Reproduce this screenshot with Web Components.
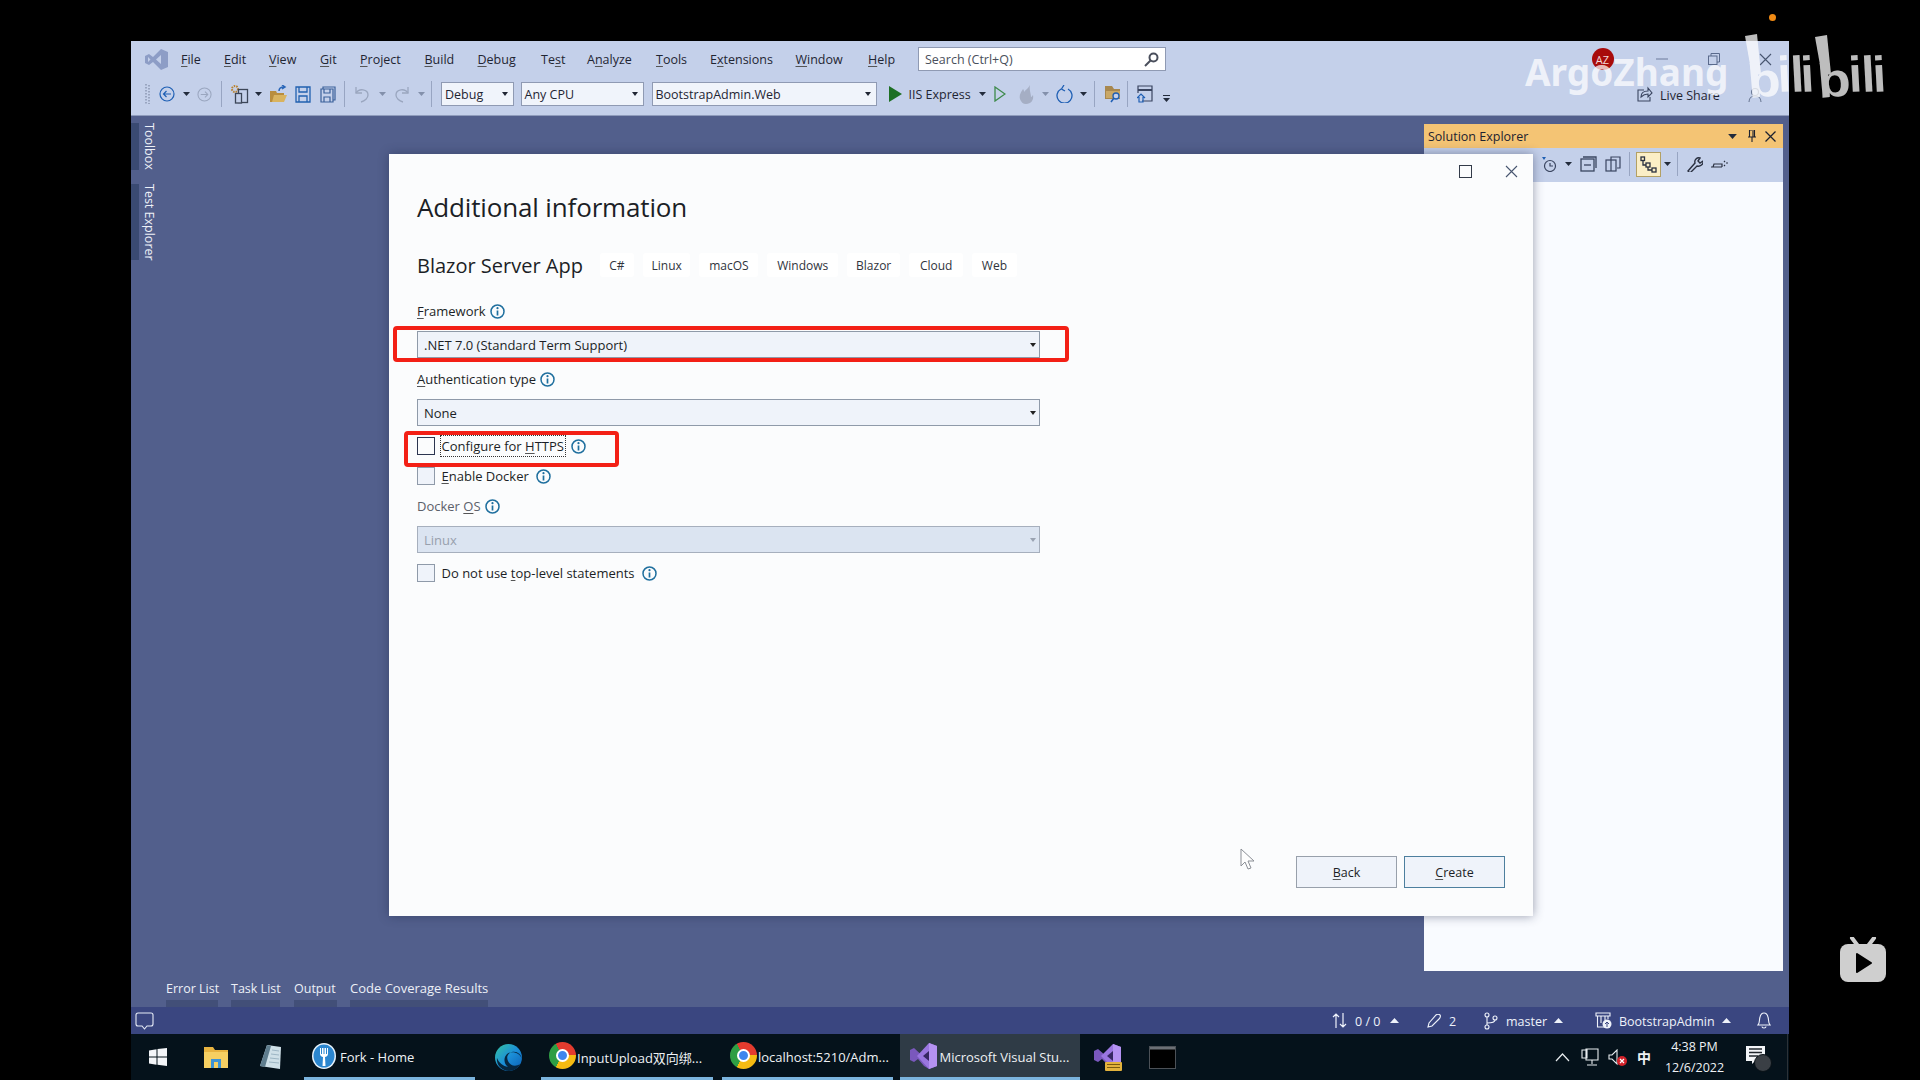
<!DOCTYPE html>
<html>
<head>
<meta charset="utf-8">
<title>Additional information</title>
<style>
  html, body { margin: 0; height: 100%; background: #000; overflow: hidden; }
  body { font-family: "Open Sans", "Noto Sans CJK SC", sans-serif; font-size: 13px; color: #1b1f2a; }
  u { text-decoration-thickness: 1px; text-underline-offset: 2px; text-decoration-color: #555; }
  vs-statusbar span { margin-top: 2px; }
</style>
</head>
<body>

<vs-window>
  <vs-menubar>
    <vs-icon name="vslogo" w="23" h="21" style="margin-left:13.5px;margin-right:13.5px"></vs-icon>
    <vs-menu style="width:43px"><u>F</u>ile</vs-menu>
    <vs-menu style="width:45px"><u>E</u>dit</vs-menu>
    <vs-menu style="width:51px"><u>V</u>iew</vs-menu>
    <vs-menu style="width:40px"><u>G</u>it</vs-menu>
    <vs-menu style="width:64.5px"><u>P</u>roject</vs-menu>
    <vs-menu style="width:53px"><u>B</u>uild</vs-menu>
    <vs-menu style="width:63.5px"><u>D</u>ebug</vs-menu>
    <vs-menu style="width:46px">Te<u>s</u>t</vs-menu>
    <vs-menu style="width:69px">A<u>n</u>alyze</vs-menu>
    <vs-menu style="width:54px"><u>T</u>ools</vs-menu>
    <vs-menu style="width:85.5px">E<u>x</u>tensions</vs-menu>
    <vs-menu style="width:72.5px"><u>W</u>indow</vs-menu>
    <vs-menu style="width:50px"><u>H</u>elp</vs-menu>
    <vs-search>Search (Ctrl+Q)</vs-search>
    <vs-avatar style="margin-left:425.5px">AZ</vs-avatar>
    <vs-icon name="min" w="12" h="12" style="margin-left:42px"></vs-icon>
    <vs-icon name="restore" w="12" h="12" style="margin-left:40px"></vs-icon>
    <vs-icon name="close" w="13" h="13" style="margin-left:39px"></vs-icon>
    <vs-toolrow slot="row2">
      <vs-icon name="grip" w="6" h="20" style="margin-left:13.5px"></vs-icon>
      <vs-icon name="back" w="16" h="16" style="margin-left:8.5px"></vs-icon>
      <vs-icon name="caret" w="7" h="4" style="margin-left:8px"></vs-icon>
      <vs-icon name="forward" w="15" h="15" style="margin-left:7px"></vs-icon>
      <vs-sep style="margin-left:9px"></vs-sep>
      <vs-icon name="newproj" w="19" h="20" style="margin-left:7.5px"></vs-icon>
      <vs-icon name="caret" w="7" h="4" style="margin-left:6px"></vs-icon>
      <vs-icon name="open" w="17" h="18" style="margin-left:8.5px"></vs-icon>
      <vs-icon name="save" w="16" h="17" style="margin-left:7.5px"></vs-icon>
      <vs-icon name="saveall" w="16" h="17" style="margin-left:9px"></vs-icon>
      <vs-sep style="margin-left:8px"></vs-sep>
      <vs-icon name="undo" w="15" h="18" style="margin-left:10px"></vs-icon>
      <vs-icon name="caretgrey" w="7" h="4" style="margin-left:9px"></vs-icon>
      <vs-icon name="redo" w="15" h="18" style="margin-left:8px"></vs-icon>
      <vs-icon name="caretgrey" w="7" h="4" style="margin-left:9px"></vs-icon>
      <vs-sep style="margin-left:6px"></vs-sep>
      <vs-combo style="width:73px;margin-left:9.5px">Debug</vs-combo>
      <vs-combo style="width:123px;margin-left:6.5px">Any CPU</vs-combo>
      <vs-combo style="width:225px;margin-left:8px">BootstrapAdmin.Web</vs-combo>
      <vs-icon name="play" w="13" h="16" style="margin-left:12px"></vs-icon>
      <span style="margin-left:7px;width:65px;white-space:nowrap">IIS Express</span>
      <vs-icon name="caret" w="7" h="4" style="margin-left:5px"></vs-icon>
      <vs-icon name="playo" w="12" h="16" style="margin-left:8px"></vs-icon>
      <vs-icon name="flame" w="15" h="19" style="margin-left:13px"></vs-icon>
      <vs-icon name="caretgrey" w="7" h="4" style="margin-left:8px"></vs-icon>
      <vs-icon name="refresh" w="17" h="18" style="margin-left:7px"></vs-icon>
      <vs-icon name="caret" w="7" h="4" style="margin-left:7px"></vs-icon>
      <vs-sep style="margin-left:7px"></vs-sep>
      <vs-icon name="folderfind" w="16" h="18" style="margin-left:10px"></vs-icon>
      <vs-sep style="margin-left:6px"></vs-sep>
      <vs-icon name="winhome" w="16" h="18" style="margin-left:9px"></vs-icon>
      <vs-icon name="overflow" w="7" h="8" style="margin-left:10px;margin-top:10px"></vs-icon>
      <vs-icon name="share" w="16" h="16" style="margin-left:467.5px"></vs-icon>
      <span style="margin-left:7px;width:62px;white-space:nowrap;margin-top:2px">Live Share</span>
      <vs-icon name="person" w="14" h="15" style="margin-left:26px"></vs-icon>
    </vs-toolrow>
  </vs-menubar>

  <vs-workspace>
    <vs-sidetabs slot="left">
      <vs-sidetab style="height:47px">Toolbox</vs-sidetab>
      <vs-sidetab style="height:76px;margin-top:14px">Test Explorer</vs-sidetab>
    </vs-sidetabs>

    <vs-bottomtabs slot="bottom">
      <vs-bottomtab style="margin-left:166px;width:52px">Error List</vs-bottomtab>
      <vs-bottomtab style="margin-left:13px;width:49px">Task List</vs-bottomtab>
      <vs-bottomtab style="margin-left:14px;width:43px">Output</vs-bottomtab>
      <vs-bottomtab style="margin-left:13px;width:138px;font-size:13px;line-height:17px">Code Coverage Results</vs-bottomtab>
    </vs-bottomtabs>

    <vs-solution slot="right"></vs-solution>

    <vs-dialog slot="dialog">
      <vs-title>Additional information</vs-title>
      <vs-subtitle>
        Blazor Server App
        <vs-chip slot="chips" style="width:34px">C#</vs-chip>
        <vs-chip slot="chips" style="width:47.5px">Linux</vs-chip>
        <vs-chip slot="chips" style="width:59px">macOS</vs-chip>
        <vs-chip slot="chips" style="width:70.5px">Windows</vs-chip>
        <vs-chip slot="chips" style="width:53.5px">Blazor</vs-chip>
        <vs-chip slot="chips" style="width:53.5px">Cloud</vs-chip>
        <vs-chip slot="chips" style="width:45px">Web</vs-chip>
      </vs-subtitle>
      <vs-label style="margin-top:24px"><u>F</u>ramework</vs-label>
      <vs-select style="margin-top:10px">.NET 7.0 (Standard Term Support)</vs-select>
      <vs-label style="margin-top:11px"><u>A</u>uthentication type</vs-label>
      <vs-select style="margin-top:10px">None</vs-select>
      <vs-check focused style="margin-top:10px">Configure for <u>H</u>TTPS</vs-check>
      <vs-check style="margin-top:10px"><u>E</u>nable Docker</vs-check>
      <vs-label muted style="margin-top:10px">Docker <u>O</u>S</vs-label>
      <vs-select disabled style="margin-top:10px">Linux</vs-select>
      <vs-check style="margin-top:10px">Do not use <u>t</u>op-level statements</vs-check>
      <vs-button slot="footer"><u>B</u>ack</vs-button>
      <vs-button slot="footer" primary><u>C</u>reate</vs-button>
    </vs-dialog>
  </vs-workspace>

  <vs-statusbar>
    <vs-icon name="bubble" w="19" h="18" style="margin-left:4px"></vs-icon>
    <vs-icon name="arrows" w="15" h="15" style="margin-left:1178px"></vs-icon>
    <span style="margin-left:8px;width:31px;white-space:nowrap">0 / 0</span>
    <vs-icon name="up" w="9" h="5" style="margin-left:4px"></vs-icon>
    <vs-icon name="pencil" w="14" h="14" style="margin-left:28px"></vs-icon>
    <span style="margin-left:8px;width:10px">2</span>
    <vs-icon name="branch" w="14" h="18" style="margin-left:25px"></vs-icon>
    <span style="margin-left:8px;width:42px">master</span>
    <vs-icon name="up" w="9" h="5" style="margin-left:6px"></vs-icon>
    <vs-icon name="repo" w="17" h="17" style="margin-left:32px"></vs-icon>
    <span style="margin-left:7px;width:98px">BootstrapAdmin</span>
    <vs-icon name="up" w="9" h="5" style="margin-left:5px"></vs-icon>
    <vs-icon name="bell" w="14" h="17" style="margin-left:26px"></vs-icon>
  </vs-statusbar>

  <vs-taskbar>
    <vs-icon name="winlogo" w="18" h="18" style="margin-left:18px"></vs-icon>
    <vs-icon name="explorer" w="24" h="22" style="margin-left:37px"></vs-icon>
    <vs-icon name="notepad" w="24" h="24" style="margin-left:30px"></vs-icon>
    <vs-task style="margin-left:22px;width:171px" open><vs-icon slot="icon" name="fork" w="24" h="26"></vs-icon><span style="margin-left:1px">Fork - Home</span></vs-task>
    <vs-icon name="edge" w="27" h="27" style="margin-left:19.5px"></vs-icon>
    <vs-task style="margin-left:19.5px;width:171.5px" open><vs-chrome slot="icon"></vs-chrome><span style="margin-left:-2px">InputUpload双向绑...</span></vs-task>
    <vs-task style="margin-left:9.5px;width:171px" open><vs-chrome slot="icon"></vs-chrome><span style="margin-left:-2px">localhost:5210/Adm...</span></vs-task>
    <vs-task style="margin-left:6.5px;width:180.5px" open active><vs-icon slot="icon" name="vs" w="27" h="26"></vs-icon>Microsoft Visual Stu...</vs-task>
    <vs-icon name="vspre" w="28" h="27" style="margin-left:14px"></vs-icon>
    <vs-icon name="cmd" w="27" h="23" style="margin-left:27px"></vs-icon>
    <vs-icon name="chevron" w="15" h="9" style="margin-left:379px"></vs-icon>
    <vs-icon name="network" w="18" h="18" style="margin-left:11px"></vs-icon>
    <vs-icon name="speaker" w="19" h="17" style="margin-left:9px"></vs-icon>
    <span style="margin-left:10px;width:14px;font:700 14px 'Noto Sans CJK SC',sans-serif">中</span>
    <vs-clock style="margin-left:13px"></vs-clock>
    <vs-icon name="notify" w="26" h="26" style="margin-left:21px;margin-top:3px"></vs-icon>
    <span style="margin-left:15px;width:1px;height:46px;background:#2c3238"></span>
  </vs-taskbar>
</vs-window>

<video-overlay></video-overlay>

<script>
  const ICONS = {
    vslogo: '<svg viewBox="0 0 23 21"><path fill="#8d9dc6" fill-rule="evenodd" d="M16 0l7 3v15l-7 3-8-8-4 3-4-2V7l4-2 4 3zM16 6l-5 4.500 5 4.500zM3 8v5l2.500-2.500z"/></svg>',
    min: '<svg viewBox="0 0 12 12"><path d="M0 6h12" stroke="#7b89a8" stroke-width="1.200"/></svg>',
    restore: '<svg viewBox="0 0 12 12" fill="none" stroke="#5a6a8c"><rect x=".5" y="3" width="8.500" height="8.500"/><path d="M3 3V.5h8.500V9H9"/></svg>',
    close: '<svg viewBox="0 0 13 13"><path d="M1 1l11 11M12 1L1 12" stroke="#47556f" stroke-width="1.100"/></svg>',
    caret: '<svg viewBox="0 0 7 4"><path d="M0 0h7L3.500 4z" fill="#222b3c"/></svg>',
    caretgrey: '<svg viewBox="0 0 7 4"><path d="M0 0h7L3.500 4z" fill="#8390ab"/></svg>',
    grip: '<svg viewBox="0 0 6 20"><path d="M1 0v20M4 1v19" stroke="#8b96b3" stroke-width="1.500" stroke-dasharray="1.500 1.500"/></svg>',
    back: '<svg viewBox="0 0 16 16" fill="none" stroke="#1e5fb4" stroke-width="1.200"><circle cx="8" cy="8" r="7"/><path d="M12 8H4.500M7.500 5L4.500 8l3 3"/></svg>',
    forward: '<svg viewBox="0 0 16 16" fill="none" stroke="#9aa6bf" stroke-width="1.100"><circle cx="8" cy="8" r="7"/><path d="M4 8h7.500M8.500 5l3 3-3 3"/></svg>',
    newproj: '<svg viewBox="0 0 19 20" fill="none"><circle cx="5" cy="5" r="3" stroke="#b9822f" stroke-width="2" stroke-dasharray="1.500 1"/><rect x="8.500" y="5.500" width="9" height="13" stroke="#3c4658" stroke-width="1.300"/><rect x="5.500" y="9.500" width="6" height="9.500" fill="#c4d0ea" stroke="#3c4658" stroke-width="1.300"/></svg>',
    open: '<svg viewBox="0 0 17 18"><path d="M0 6h6l1 2h7v9H0z" fill="#b98d3d"/><path d="M2 17l2-7h13l-3 7z" fill="#d9b35f"/><path d="M9 6c0-3 2-4 5-4M12 0l3 2-3 2" fill="none" stroke="#2a66b8" stroke-width="1.500"/></svg>',
    save: '<svg viewBox="0 0 16 17" fill="none" stroke="#2160b0" stroke-width="1.300"><path d="M1 1h14v15H1z"/><path d="M4 1v5h8V1M4 16v-6h8v6"/></svg>',
    saveall: '<svg viewBox="0 0 16 17" fill="none" stroke="#3a6099" stroke-width="1.200"><path d="M3 3V1h12v13h-2"/><path d="M1 3h12v13H1z"/><path d="M4 3v4h6V3M4 16v-5h6v5"/></svg>',
    undo: '<svg viewBox="0 0 15 18" fill="none" stroke="#9aa6bf" stroke-width="1.300"><path d="M1 2v6h6"/><path d="M1 8c3-5 12-4 12 2 0 3-3 6-7 7"/></svg>',
    redo: '<svg viewBox="0 0 15 18" fill="none" stroke="#9aa6bf" stroke-width="1.300"><path d="M14 2v6H8"/><path d="M14 8C11 3 2 4 2 10c0 3 3 6 7 7"/></svg>',
    play: '<svg viewBox="0 0 13 16"><path d="M0 0l13 8-13 8z" fill="#1d6f24"/></svg>',
    playo: '<svg viewBox="0 0 12 16"><path d="M1 1l10 7-10 7z" fill="none" stroke="#3d8a4a" stroke-width="1.300"/></svg>',
    flame: '<svg viewBox="0 0 15 19"><path d="M11 0c-1 3-5 5-6 7 0-1 0-2-1-3C2 7 0 10 1 14c1 3 3 5 6 5 5 0 8-4 7-9-1 1-1 2-2 2 0-4-2-7-1-12z" fill="#a5aec4"/></svg>',
    refresh: '<svg viewBox="0 0 17 18" fill="none" stroke="#1e5fb4" stroke-width="1.300"><path d="M5 4a7.500 7.500 0 1 0 7 0"/><path d="M8 0L5.500 4 9 6"/></svg>',
    folderfind: '<svg viewBox="0 0 16 18"><path d="M0 1h7l2 3h6v10H0z" fill="#a8884f"/><path d="M1 6h14v7H1z" fill="#c9a868"/><circle cx="11" cy="11" r="3" fill="#c4d0ea" stroke="#1e5fb4" stroke-width="1.300"/><path d="M9 13l-3 4" stroke="#1e5fb4" stroke-width="1.500"/></svg>',
    winhome: '<svg viewBox="0 0 16 18" fill="none" stroke="#3a4560" stroke-width="1.200"><path d="M5 16h10V1H1v7"/><path d="M1 5h14" stroke-width="2"/><path d="M0 13l4-4 4 4M2 12v5h4v-5" stroke="#1e5fb4"/></svg>',
    overflow: '<svg viewBox="0 0 7 8"><path d="M0 .5h7" stroke="#222b3c"/><path d="M0 3h7L3.500 7z" fill="#222b3c"/></svg>',
    share: '<svg viewBox="0 0 16 16" fill="none" stroke="#3a4560" stroke-width="1.100"><path d="M7 4H1v11h12v-4"/><path d="M4 11c0-4 3-6 7-6V2l4 5-4 4V8c-3 0-5 1-7 3z"/></svg>',
    person: '<svg viewBox="0 0 14 15" fill="none" stroke="#6a7894" stroke-width="1.100"><circle cx="7" cy="5" r="3.500"/><path d="M1 15c0-4 3-6 6-6s6 2 6 6"/></svg>',
    bubble: '<svg viewBox="0 0 19 18" fill="none" stroke="#e6ebf6" stroke-width="1.100"><path d="M3 1h13a2 2 0 0 1 2 2v9a2 2 0 0 1-2 2h-4l-2.500 3L7 14H3a2 2 0 0 1-2-2V3a2 2 0 0 1 2-2z"/></svg>',
    arrows: '<svg viewBox="0 0 15 15" fill="none" stroke="#eef2fa" stroke-width="1.200"><path d="M4 15V1M1 4l3-3 3 3M11 0v14M8 11l3 3 3-3"/></svg>',
    up: '<svg viewBox="0 0 9 5"><path d="M0 5h9L4.500 0z" fill="#eef2fa"/></svg>',
    pencil: '<svg viewBox="0 0 14 14" fill="none" stroke="#eef2fa" stroke-width="1.100"><path d="M1 13l1-4 7-8c1-1 3-1 4 0s0 3-1 4l-7 7z"/></svg>',
    branch: '<svg viewBox="0 0 14 18" fill="none" stroke="#eef2fa" stroke-width="1.100"><circle cx="3" cy="3" r="2"/><circle cx="3" cy="15" r="2"/><circle cx="11" cy="6" r="2"/><path d="M3 5v8M3 11c5 0 8-1 8-3"/></svg>',
    repo: '<svg viewBox="0 0 17 17"><path d="M1 1h14v3H1zM2.500 4v11H9M6 4v7M10 4v4M13 4v3" fill="none" stroke="#eef2fa" stroke-width="1.100"/><circle cx="12" cy="12" r="4.500" fill="#eef2fa"/><path d="M12 15v-5M10 12l2-2 2 2" stroke="#3a4680" fill="none"/></svg>',
    bell: '<svg viewBox="0 0 14 17" fill="none" stroke="#eef2fa" stroke-width="1.100"><path d="M1 13h12c-2-2-1-5-2-8-.5-2-2-4-4-4S3.500 3 3 5c-1 3 0 6-2 8zM5 14.500c0 2 4 2 4 0"/></svg>',
    winlogo: '<svg viewBox="0 0 18 18"><path d="M0 2.500l7.500-1.200V8.500H0zM8.500 1.100L18 0v8.500H8.500zM0 9.500h7.500v7.300L0 15.500zM8.500 9.500H18V18l-9.500-1.300z" fill="#f3f5f8"/></svg>',
    explorer: '<svg viewBox="0 0 24 22"><path d="M0 1h9l2 3h13v18H0z" fill="#e8b340"/><path d="M0 6h24v16H0z" fill="#f6cf62"/><path d="M7 13h10v9H7z" fill="#3d93d6"/><path d="M10 16h4v6h-4z" fill="#f6cf62"/></svg>',
    notepad: '<svg viewBox="0 0 24 24"><path d="M9 0l14 2-1 22-20-3z" fill="#cfe0e8"/><path d="M9 0L2 21l5 1L13 1z" fill="#5f7d8e"/><path d="M14 5l7 1M13 9l8 1M12 13l9 1M11 17l10 1" stroke="#9db6c4"/></svg>',
    fork: '<svg viewBox="0 0 24 26"><ellipse cx="12" cy="13" rx="12" ry="13" fill="#e6f2fb"/><ellipse cx="12" cy="13" rx="10.500" ry="11.500" fill="#2b86cf"/><path d="M8 5v6c0 2 2 3 3 3l-.5 9h3l-.5-9c1 0 3-1 3-3V5h-1v6h-1V5h-1.500v6h-1V5h-1.500v6H9V5z" fill="#fff"/></svg>',
    edge: '<svg viewBox="0 0 27 27"><defs><linearGradient id="e" x1="0" y1="0" x2="1" y2="1"><stop offset="0" stop-color="#36c4a0"/><stop offset=".5" stop-color="#1b8fd8"/><stop offset="1" stop-color="#0b5db3"/></linearGradient></defs><circle cx="13.500" cy="13.500" r="13.500" fill="url(#e)"/><path d="M27 15c-1-5-5-8-10-7-4 1-6 5-4 9 2 5 8 6 12 3-2 4-6 7-11 7C7 27 1 21 2 14c2 5 6 8 11 9-4-3-5-9-1-13 5-4 13-1 15 5z" fill="#06263f"/></svg>',
    vs: '<svg viewBox="0 0 27 26"><path d="M0 7l4-2 15 14v7l-5-3-6-7-4 3-4-2z" fill="#7a58bd"/><path d="M19 0l8 3v20l-8 3L7 13z" fill="#9a76e0"/><path d="M19 0l8 3v20l-8 3z" fill="#b592f2"/><path d="M13 13l6-5v10z" fill="#362763"/></svg>',
    vspre: '<svg viewBox="0 0 28 27"><path d="M0 7l4-2 15 13v6l-5-3-6-6-4 3-4-2z" fill="#7a58bd"/><path d="M19 0l8 3v18l-8 3L7 12z" fill="#9a76e0"/><path d="M19 0l8 3v18l-8 3z" fill="#b592f2"/><path d="M13 12l6-5v10z" fill="#362763"/><rect x="11" y="18" width="17" height="9" rx="1" fill="#e3b23c"/><path d="M13 20h13v1H13zM13 23h13v1H13z" fill="#7a5a10"/></svg>',
    cmd: '<svg viewBox="0 0 27 23"><rect x=".5" y=".5" width="26" height="22" fill="#000" stroke="#4c5157"/><rect x="1" y="1" width="25" height="2.500" fill="#6c7076"/></svg>',
    chevron: '<svg viewBox="0 0 15 9"><path d="M1 8l6.500-7L14 8" fill="none" stroke="#e8ecef" stroke-width="1.200"/></svg>',
    network: '<svg viewBox="0 0 18 18" fill="none" stroke="#e8ecef" stroke-width="1.100"><path d="M5 1h12v11H5zM11 12v4M6 17h10M1 2h5v8H1z"/></svg>',
    speaker: '<svg viewBox="0 0 19 17"><path d="M1 6h3l5-5v14l-5-5H1z" fill="none" stroke="#e8ecef" stroke-width="1.100"/><circle cx="14" cy="12" r="5" fill="#d3222a"/><path d="M12 10l4 4M16 10l-4 4" stroke="#fff" stroke-width="1.200"/></svg>',
    notify: '<svg viewBox="0 0 26 26"><path d="M0 0h19v15H9l-3 3v-3H0z" fill="#f3f5f8"/><path d="M3 3h13M3 6.500h13M3 10h9" stroke="#20262c" stroke-width="1.300"/><circle cx="17" cy="17" r="8.500" fill="#3a3f45" stroke="#0a1218"/></svg>',
    solclock: '<svg viewBox="0 0 15 15" fill="none" stroke="#3a4560" stroke-width="1.200"><circle cx="8" cy="9" r="5.500"/><path d="M8 6v3h3"/><path d="M0 0h4L2 3z" fill="#1e5fb4" stroke="none"/></svg>',
    collapse: '<svg viewBox="0 0 17 16" fill="none" stroke="#3a4560" stroke-width="1.300"><path d="M3 1h13v11"/><rect x="1" y="3" width="13" height="12"/><path d="M4 9h7"/></svg>',
    copies: '<svg viewBox="0 0 16 16" fill="none" stroke="#3a4560" stroke-width="1.200"><path d="M6 4V1h9v11h-3"/><rect x="1" y="4" width="10" height="11"/><path d="M6 4v11" /></svg>',
    tree: '<svg viewBox="0 0 17 17" fill="none" stroke="#2a3040" stroke-width="1.300"><rect x="1" y="1" width="3.500" height="3.500"/><rect x="6" y="7" width="4" height="4"/><rect x="12" y="12" width="4" height="4"/><path d="M3 5v4h3M8 11v3h4"/></svg>',
    wrench: '<svg viewBox="0 0 16 16"><path d="M1 15l7-8c-1-3 2-6 5-5l-2 3 2 2 3-2c1 3-3 6-6 5l-7 7z" fill="none" stroke="#2a3040" stroke-width="1.400"/></svg>',
    sweep: '<svg viewBox="0 0 18 10" fill="none" stroke="#2a3040" stroke-width="1.200"><path d="M0 8h11M2 8l1-3h8v3M13 2l1 1M15 4h2M13 6l1 1"/></svg>',
    pin: '<svg viewBox="0 0 8 12"><path d="M1.500 0h5v7h-5zM0 7h8M4 7v5M5 1v6" fill="none" stroke="#1d2230" stroke-width="1.100"/></svg>',
    sclose: '<svg viewBox="0 0 11 11"><path d="M.5.500l10 10M10.500.500l-10 10" stroke="#1d2230" stroke-width="1.300"/></svg>',
    info: '<svg viewBox="0 0 15 15" fill="none"><circle cx="7.500" cy="7.500" r="6.500" stroke="#1f6f9e" stroke-width="1.500"/><path d="M7.500 6.500V11.500" stroke="#1f6f9e" stroke-width="1.700"/><circle cx="7.500" cy="4.200" r="1.100" fill="#1f6f9e"/></svg>',
    cursor: '<svg viewBox="0 0 15 23"><path d="M1 1v17l4-4 3 7 3-1-3-7h6z" fill="#fdfdfd" stroke="#8b8f96"/></svg>'
  };

  // tiny helper so every component below stays one short class
  function comp(tag, css, html, init) {
    customElements.define(tag, class extends HTMLElement {
      constructor() {
        super();
        this.attachShadow({ mode: 'open' });
        this.shadowRoot.innerHTML = '<style>' + css + '</style>' + html;
      }
      connectedCallback() { if (init) init(this); }
    });
  }

  comp('vs-icon', ':host{display:inline-flex;flex:none} svg{display:block;width:100%;height:100%}', '', el => {
    el.style.width = el.getAttribute('w') + 'px';
    el.style.height = el.getAttribute('h') + 'px';
    el.shadowRoot.innerHTML += ICONS[el.getAttribute('name')];
  });

  comp('vs-window', `:host{display:flex;flex-direction:column;position:absolute;left:131px;top:41px;width:1658px;height:1039px;background:#525f8c}`, '<slot></slot>');

  comp('vs-menubar', `:host{display:block;flex:none;height:75px;box-sizing:border-box;background:#c4d0ea;border-bottom:1px solid #8f9cbc}
    .r1{display:flex;align-items:center;height:36px}`, '<div class="r1"><slot></slot></div><slot name="row2"></slot>');

  comp('vs-menu', `:host{display:block;flex:none;white-space:nowrap;color:#1f2533;font-size:12.500px;padding-top:1px}`, '<slot></slot>');

  comp('vs-search', `:host{display:flex;align-items:center;justify-content:space-between;flex:none;width:248px;height:24px;box-sizing:border-box;padding:0 6px;background:#fff;border:1px solid #8f9ab3;color:#4a4f5c;font-size:12.500px}
    svg{width:15px;height:15px}`, '<slot></slot><svg viewBox="0 0 15 15" fill="none" stroke="#4a4f5c" stroke-width="2"><circle cx="9.500" cy="5.500" r="4"/><path d="M6.500 8.500L1 14"/></svg>');

  comp('vs-avatar', `:host{display:flex;align-items:center;justify-content:center;flex:none;width:22px;height:22px;border-radius:50%;background:#a80b0b;color:#f3d8d8;font-size:11px}`, '<slot></slot>');

  comp('vs-toolrow', `:host{display:flex;align-items:center;height:38px;margin-top:-2px;font-size:12.500px;color:#1f2533}`, '<slot></slot>');

  comp('vs-sep', `:host{display:block;flex:none;width:1px;height:26px;background:#98a5c2}`, '');

  comp('vs-combo', `:host{display:flex;align-items:center;justify-content:space-between;flex:none;height:24px;box-sizing:border-box;padding:0 5px 0 3px;background:#f0f4fb;border:1px solid #8f9ab3;color:#1f2533;font-size:12.500px;white-space:nowrap}
    i{width:0;height:0;border:3.500px solid transparent;border-top:4px solid #1f2533;border-bottom:0}`, '<slot></slot><i></i>');

  comp('vs-workspace', `:host{display:grid;flex:1;min-height:0;position:relative;grid-template-columns:1fr 359px 6px;grid-template-rows:8px 847px 1fr}
    .l{grid-column:1;grid-row:1 / 4;display:flex;flex-direction:column;justify-content:space-between;min-height:0}
    .r{grid-column:2;grid-row:2;display:flex;min-height:0}`,
    '<div class="l"><slot name="left"></slot><slot name="bottom"></slot></div><div class="r"><slot name="right"></slot></div><slot name="dialog"></slot>');

  comp('vs-sidetabs', `:host{display:flex;flex-direction:column;padding-top:7px}`, '<slot></slot>');
  comp('vs-sidetab', `:host{display:block;box-sizing:border-box;width:24px;border-left:8px solid #3a4a72;padding-left:6px;writing-mode:vertical-rl;color:#eef1f8;font-size:12.500px;line-height:12px;white-space:nowrap}`, '<slot></slot>');

  comp('vs-bottomtabs', `:host{display:flex;margin-left:-131px}`, '<slot></slot>');
  comp('vs-bottomtab', `:host{display:block;flex:none;box-sizing:border-box;height:27px;border-bottom:7px solid #424f78;color:#edf0f7;font-size:12.500px;line-height:18px;white-space:nowrap}`, '<slot></slot>');

  comp('vs-solution', `:host{display:flex;flex-direction:column;flex:1}
    .t{display:flex;align-items:center;height:24px;flex:none;background:#f4c474;padding:0 4px;font-size:12.500px;color:#1d2230}
    .t span{flex:1}
    .b{display:flex;align-items:center;height:34px;box-sizing:border-box;padding-bottom:2px;flex:none;background:#c4d0ea;padding-left:118px}
    .on{display:flex;align-items:center;justify-content:center;box-sizing:border-box;width:25px;height:25px;background:#fbeec6;border:1px solid #b3a064;margin-left:6px}
    .p{flex:1;background:#f9fbff}
    vs-sep{height:24px}`,
    `<div class="t"><span>Solution Explorer</span><vs-icon name="caret" w="9" h="5"></vs-icon><vs-icon name="pin" w="8" h="12" style="margin-left:11px"></vs-icon><vs-icon name="sclose" w="11" h="11" style="margin-left:9px;margin-right:3px"></vs-icon></div>
     <div class="b"><vs-icon name="solclock" w="15" h="15"></vs-icon><vs-icon name="caret" w="7" h="4" style="margin-left:8px"></vs-icon><vs-icon name="collapse" w="17" h="16" style="margin-left:8px"></vs-icon><vs-icon name="copies" w="16" h="16" style="margin-left:8px"></vs-icon><vs-sep style="margin-left:8px"></vs-sep><div class="on"><vs-icon name="tree" w="17" h="17"></vs-icon></div><vs-icon name="caret" w="7" h="4" style="margin-left:3px"></vs-icon><vs-sep style="margin-left:6px"></vs-sep><vs-icon name="wrench" w="16" h="16" style="margin-left:9px"></vs-icon><vs-icon name="sweep" w="18" h="10" style="margin-left:8px"></vs-icon></div>
     <div class="p"></div>`);

  comp('vs-dialog', `:host{position:absolute;left:258px;top:38px;width:1144px;height:762px;box-sizing:border-box;display:flex;flex-direction:column;background:#fbfcfd;box-shadow:0 0 10px rgba(30,40,70,.45);padding:0 28px 28px 28px;color:#1c1f26}
    .h{display:flex;justify-content:flex-end;align-items:center;gap:33px;height:34px;margin-bottom:1px;flex:none;margin-right:-13px}
    .max{width:11px;height:11px;border:1.500px solid #333b49}
    .x{width:13px;height:13px}
    .f{display:flex;justify-content:flex-end;gap:7px;margin-top:auto}
    .red{position:absolute;box-sizing:border-box;border:4px solid #f32016;border-radius:4px;pointer-events:none}
    .cur{position:absolute;left:851px;top:694px}`,
    `<div class="h"><div class="max"></div><vs-icon class="x" name="close" w="13" h="13"></vs-icon></div>
     <slot></slot><div class="f"><slot name="footer"></slot></div>
     <div class="red" style="left:4px;top:172px;width:676px;height:36px"></div>
     <div class="red" style="left:15px;top:277px;width:215px;height:36px"></div>
     <vs-icon class="cur" name="cursor" w="15" h="23"></vs-icon>`);

  comp('vs-title', `:host{display:block;flex:none;font-size:26px;letter-spacing:-.15px;line-height:36px;color:#1c1f26;white-space:nowrap}`, '<slot></slot>');

  comp('vs-subtitle', `:host{display:flex;align-items:center;flex:none;height:24px;margin-top:28px;font-size:20px;white-space:nowrap}
    .c{display:flex;gap:9px;margin-left:17px}`, '<slot></slot><div class="c"><slot name="chips"></slot></div>');

  comp('vs-chip', `:host{display:flex;align-items:center;justify-content:center;flex:none;height:24px;background:#fff;border-radius:3px;font-size:12px;color:#30343d}`, '<slot></slot>');

  comp('vs-label', `:host{display:flex;align-items:center;flex:none;height:20px;gap:4px;font-size:13px;color:#1c1f26}
    :host([muted]){color:#5c606a}`, '<span><slot></slot></span><vs-icon name="info" w="15" h="15"></vs-icon>');

  comp('vs-select', `:host{display:flex;align-items:center;justify-content:space-between;flex:none;width:623px;height:27px;box-sizing:border-box;padding:0 3px 0 6px;background:#eff3fa;border:1px solid #8f9aa9;font-size:13px;color:#1c1f26;position:relative}
    :host([disabled]){background:#dbe4f1;color:#98a0ad;border-color:#a6afbd}
    i{width:0;height:0;border:3.500px solid transparent;border-top:4px solid #222;border-bottom:0}
    :host([disabled]) i{border-top-color:#9aa3b2}`, '<span><slot></slot></span><i></i>');

  comp('vs-check', `:host{display:flex;align-items:center;flex:none;height:20px;font-size:13px;color:#1c1f26}
    .b{box-sizing:border-box;width:18px;height:18px;background:#eff3fa;border:1px solid #8f9aa9;flex:none}
    .t{margin-left:6.500px;white-space:nowrap}
    .i{margin-left:7px}
    :host([focused]) .b{background:#fbfcfd;border:1.500px solid #2c3550}
    :host([focused]) .t{outline:1px dotted #333;outline-offset:1px}`, '<div class="b"></div><div class="t"><slot></slot></div><vs-icon class="i" name="info" w="15" h="15"></vs-icon>');

  comp('vs-button', `:host{display:flex;align-items:center;justify-content:center;flex:none;box-sizing:border-box;width:101px;height:32px;background:#eff3fa;border:1.500px solid #98a0ab;font-size:12.500px;color:#1c1f26}
    :host([primary]){border-color:#4d7f9e}`, '<slot></slot>');

  comp('vs-statusbar', `:host{display:flex;align-items:center;flex:none;height:27px;background:#3a4680;color:#eef2fa;font-size:12.500px;white-space:nowrap}`, '<slot></slot>');

  comp('vs-taskbar', `:host{display:flex;align-items:center;flex:none;height:46px;background:#05121b;color:#eef1f4;font-size:12.500px;white-space:nowrap}`, '<slot></slot>');

  comp('vs-task', `:host{display:flex;align-items:center;flex:none;box-sizing:border-box;height:46px;padding-left:8px;gap:3px;border-bottom:3px solid transparent;white-space:nowrap;color:#eef1f4;font-size:13px}
    :host([open]){border-bottom-color:#7bb4de}
    :host([active]){background:#2f3b46;padding-left:10px}
    .t{margin-top:3px}`, '<slot name="icon"></slot><div class="t"><slot></slot></div>');

  comp('vs-chrome', `:host{display:block;flex:none;position:relative;width:27px;height:27px;border-radius:50%;background:conic-gradient(#e33b2e 0 90deg,#f5bb12 90deg 210deg,#2f9e44 210deg 330deg,#e33b2e 330deg)}
    div{position:absolute;left:7px;top:7px;width:13px;height:13px;box-sizing:border-box;border-radius:50%;background:#3f86ee;border:2px solid #fff}`, '<div></div>');

  comp('vs-clock', `:host{display:flex;flex-direction:column;align-items:center;flex:none;width:61px;font-size:12.500px;line-height:21px;color:#eef1f4}`, '<span>4:38 PM</span><span>12/6/2022</span>');

  comp('video-overlay', `:host{position:absolute;left:0;top:0;width:1920px;height:1080px;pointer-events:none;overflow:hidden}
    .name{position:absolute;left:1525px;top:45px;font:700 37px/54px "Noto Sans",sans-serif;color:rgba(255,255,255,.72);white-space:nowrap}
    .dot{position:absolute;left:1769px;top:14px;width:7px;height:7px;border-radius:50%;background:#f08a14}
    svg{position:absolute}
    text{font:700 60px "Liberation Sans",sans-serif;fill:#fff}`,
    `<div class="name">ArgoZhang</div><div class="dot"></div>
     <svg style="left:1730px;top:0;opacity:.74" width="190" height="120">
       <polygon points="15,36 27,34 31,74 22,76" fill="#fff"/>
       <text transform="translate(19 98) rotate(-5) scale(.9 .8)">b</text>
       <text transform="translate(48.500 92) rotate(-3) scale(.8 .84)">i</text>
       <text transform="translate(61.500 92) rotate(-3) scale(.8 .84)">l</text>
       <text transform="translate(71.500 92) rotate(-3) scale(.8 .84)">i</text>
       <polygon points="85,37 97,35 101,74 92,76" fill="#fff"/>
       <text transform="translate(89 98) rotate(-5) scale(.9 .8)">b</text>
       <text transform="translate(119.500 92) rotate(-3) scale(.8 .84)">i</text>
       <text transform="translate(132.500 92) rotate(-3) scale(.8 .84)">l</text>
       <text transform="translate(143.500 92) rotate(-3) scale(.8 .84)">i</text>
     </svg>
     <svg style="left:1840px;top:937px" width="46" height="46" viewBox="0 0 46 46">
       <path d="M12 1l6 8M34 1l-6 8" stroke="#cfcfcf" stroke-width="4" stroke-linecap="round"/>
       <rect x="0" y="7" width="46" height="38" rx="8" fill="#cfcfcf"/>
       <path d="M17 17l14 9-14 9z" fill="#000" stroke="#000" stroke-width="2" stroke-linejoin="round"/>
     </svg>`);
</script>
</body>
</html>
